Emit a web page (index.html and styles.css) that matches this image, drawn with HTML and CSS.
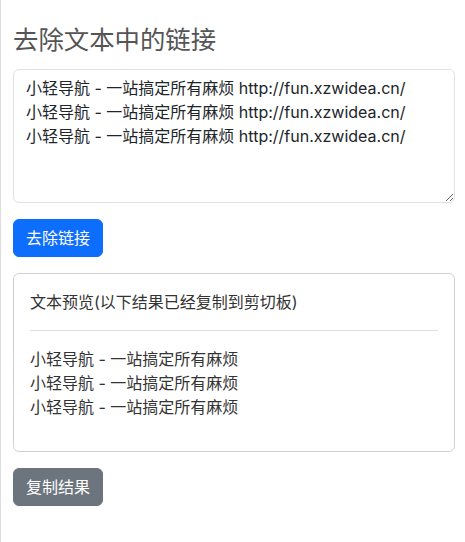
FILE: index.html
```html
<!DOCTYPE html>
<html lang="zh-CN">
<head>
<meta charset="utf-8">
<title>去除文本中的链接</title>
<link rel="stylesheet" href="styles.css">
</head>
<body>
<div class="page">
  <h2 class="title">去除文本中的链接</h2>
  <textarea class="input" rows="5">小轻导航 - 一站搞定所有麻烦 http://fun.xzwidea.cn/
小轻导航 - 一站搞定所有麻烦 http://fun.xzwidea.cn/
小轻导航 - 一站搞定所有麻烦 http://fun.xzwidea.cn/</textarea>
  <div class="actions"><button class="btn btn-primary" type="button">去除链接</button></div>
  <div class="card">
    <p class="card-title">文本预览(以下结果已经复制到剪切板)</p>
    <hr class="divider">
    <p class="result">小轻导航 - 一站搞定所有麻烦<br>小轻导航 - 一站搞定所有麻烦<br>小轻导航 - 一站搞定所有麻烦</p>
  </div>
  <div class="actions"><button class="btn btn-secondary" type="button">复制结果</button></div>
</div>
</body>
</html>
```

FILE: styles.css
```css
html, body {
  margin: 0;
  padding: 0;
  background: #fff;
}
body {
  font-family: Inter, "Noto Sans CJK SC", sans-serif;
  font-size: 16px;
  line-height: 1.5;
  color: #212529;
}
.page {
  box-sizing: border-box;
  min-height: 542px;
  border-left: 1px solid #dcdcdc;
  padding: 25px 10px 0 12px;
}
.title {
  margin: 0 0 14px;
  font-size: 25.4px;
  line-height: 1.2;
  font-weight: 400;
  color: #555;
}
.input {
  display: block;
  box-sizing: border-box;
  width: 100%;
  height: 134px;
  margin: 0 0 16px;
  padding: 6px 12px;
  border: 1px solid #dee2e6;
  border-radius: 6px;
  font: inherit;
  color: #212529;
  resize: vertical;
  background: #fff;
}
.actions {
  display: flex;
  margin-bottom: 16px;
}
.btn {
  padding: 6px 12px;
  border: 1px solid transparent;
  border-radius: 6px;
  font: inherit;
  line-height: 1.5;
  color: #fff;
  cursor: pointer;
}
.btn-primary {
  background: #0d6efd;
  border-color: #0d6efd;
}
.btn-secondary {
  background: #6c757d;
  border-color: #6c757d;
}
.card {
  border: 1px solid rgba(0, 0, 0, 0.175);
  border-radius: 6px;
  padding: 16px;
  margin-bottom: 16px;
  color: #333;
}
.card-title {
  margin: 0 0 16px;
}
.divider {
  margin: 16px 0;
  border: 0;
  border-top: 1px solid currentColor;
  opacity: 0.25;
}
.result {
  margin: 0 0 16px;
}
```
